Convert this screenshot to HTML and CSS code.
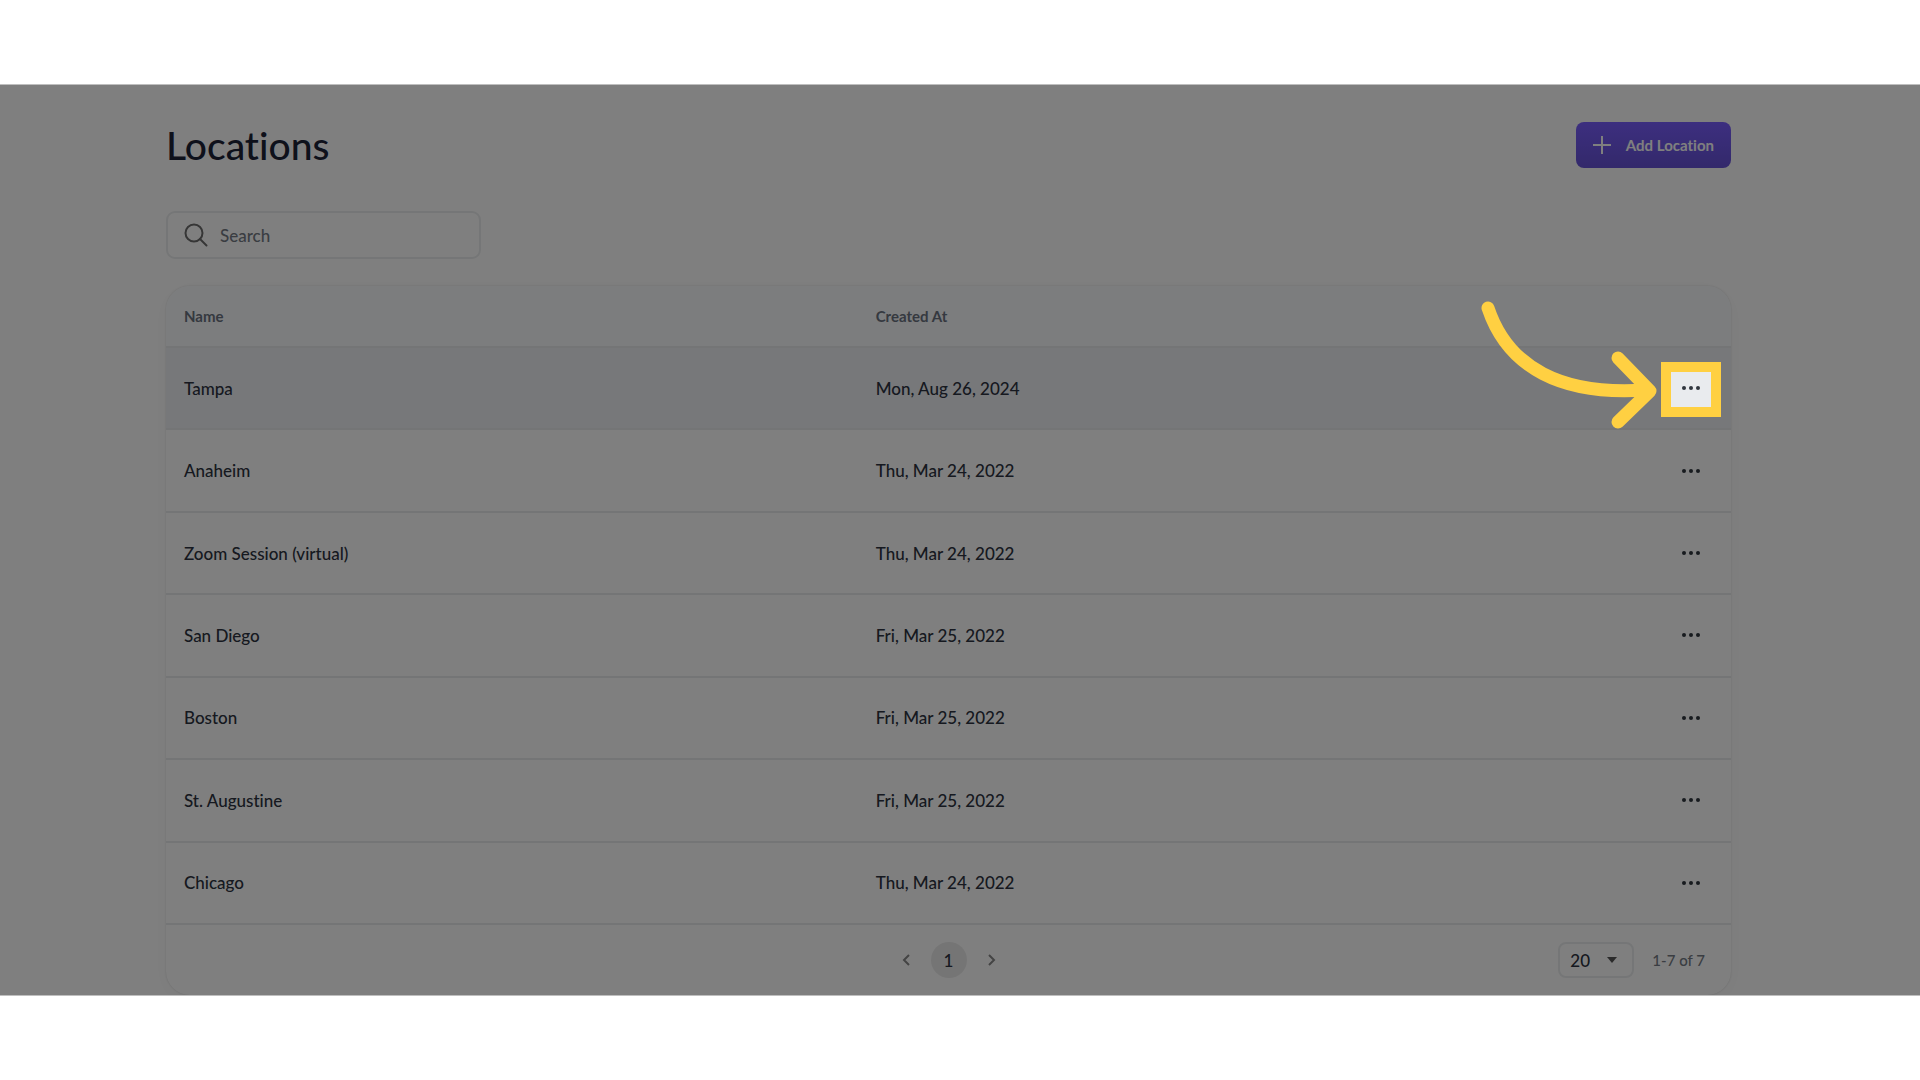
FILE: index.html
```
<!DOCTYPE html>
<html lang="en">
<head>
  <meta charset="UTF-8">
  <meta name="viewport" content="width=device-width, initial-scale=1.0">
  <title>Locations</title>
  <link rel="stylesheet" href="styles.css">
</head>
<body>
  <main class="screen">
    <header class="page-header">
      <h1>Locations</h1>
      <button class="add-button" type="button">
        <svg width="18" height="18" viewBox="0 0 18 18" fill="none" stroke="currentColor" stroke-width="2" aria-hidden="true"><path d="M9 0v18M0 9h18"/></svg>
        Add Location
      </button>
    </header>

    <label class="search">
      <svg width="24" height="24" viewBox="0 0 24 24" fill="none" stroke="currentColor" stroke-width="2" stroke-linecap="round" aria-hidden="true"><circle cx="10" cy="10" r="8.5"/><path d="M16 16l6.5 6.5"/></svg>
      <input type="text" placeholder="Search" aria-label="Search">
    </label>

    <section class="card">
      <table class="locations">
        <thead>
          <tr>
            <th class="col-name" scope="col">Name</th>
            <th scope="col">Created At</th>
            <th class="col-actions" scope="col" aria-label="Actions"></th>
          </tr>
        </thead>
        <tbody>
          <tr class="active">
            <td>Tampa</td>
            <td>Mon, Aug 26, 2024</td>
            <td class="col-actions">
              <div class="spotlight">
                <button class="more" type="button" aria-label="More actions for Tampa"><span></span><span></span><span></span></button>
                <svg class="arrow" width="178" height="130" viewBox="0 0 178 130" fill="none" stroke="#ffd042" stroke-width="13" stroke-linecap="round" stroke-linejoin="round" aria-hidden="true"><path d="M8 8C28 68 82 96 166 90"/><path d="M138 58l32 33-32 31"/></svg>
              </div>
            </td>
          </tr>
          <tr>
            <td>Anaheim</td>
            <td>Thu, Mar 24, 2022</td>
            <td class="col-actions"><button class="more" type="button" aria-label="More actions for Anaheim"><span></span><span></span><span></span></button></td>
          </tr>
          <tr>
            <td>Zoom Session (virtual)</td>
            <td>Thu, Mar 24, 2022</td>
            <td class="col-actions"><button class="more" type="button" aria-label="More actions for Zoom Session"><span></span><span></span><span></span></button></td>
          </tr>
          <tr>
            <td>San Diego</td>
            <td>Fri, Mar 25, 2022</td>
            <td class="col-actions"><button class="more" type="button" aria-label="More actions for San Diego"><span></span><span></span><span></span></button></td>
          </tr>
          <tr>
            <td>Boston</td>
            <td>Fri, Mar 25, 2022</td>
            <td class="col-actions"><button class="more" type="button" aria-label="More actions for Boston"><span></span><span></span><span></span></button></td>
          </tr>
          <tr>
            <td>St. Augustine</td>
            <td>Fri, Mar 25, 2022</td>
            <td class="col-actions"><button class="more" type="button" aria-label="More actions for St. Augustine"><span></span><span></span><span></span></button></td>
          </tr>
          <tr>
            <td>Chicago</td>
            <td>Thu, Mar 24, 2022</td>
            <td class="col-actions"><button class="more" type="button" aria-label="More actions for Chicago"><span></span><span></span><span></span></button></td>
          </tr>
        </tbody>
      </table>

      <footer class="table-footer">
        <nav class="pager" aria-label="Pagination">
          <button type="button" aria-label="Previous page"><svg width="8" height="12" viewBox="0 0 8 12" fill="none" stroke="currentColor" stroke-width="2" aria-hidden="true"><path d="M7 1L2 6l5 5"/></svg></button>
          <button class="current" type="button">1</button>
          <button type="button" aria-label="Next page"><svg width="8" height="12" viewBox="0 0 8 12" fill="none" stroke="currentColor" stroke-width="2" aria-hidden="true"><path d="M1 1l5 5-5 5"/></svg></button>
        </nav>
        <div class="page-size">
          <div class="select-wrap">
            <select aria-label="Rows per page">
              <option>20</option>
              <option>50</option>
            </select>
            <svg width="10" height="6" viewBox="0 0 10 6" fill="currentColor" aria-hidden="true"><path d="M0 0h10L5 6z"/></svg>
          </div>
          <span>1-7 of 7</span>
        </div>
      </footer>
    </section>
  </main>
</body>
</html>
```
FILE: styles.css
```
* {
  margin: 0;
  padding: 0;
  box-sizing: border-box;
}

body {
  display: flex;
  flex-direction: column;
  justify-content: center;
  min-height: 100vh;
  background: #ffffff;
  color: #2c3240;
  font-family: Lato, "Open Sans", sans-serif;
  font-size: 17px;
  font-weight: 500;
  font-variant-ligatures: none;
}

button,
input,
select {
  font: inherit;
  color: inherit;
  background: none;
  border: none;
}

button {
  cursor: pointer;
}

.screen {
  overflow: hidden;
  padding: 37px 189px 0 166px;
  border-top: 1px solid #bfbfbf;
  border-bottom: 1px solid #bfbfbf;
}

/* Header */
.page-header {
  display: flex;
  justify-content: space-between;
  align-items: center;
  height: 46px;
  margin-bottom: 43px;
}

h1 {
  color: #1c2236;
  font-size: 39px;
  font-weight: 500;
}

.add-button {
  display: flex;
  align-items: center;
  gap: 15px;
  height: 46px;
  padding: 0 17px;
  border-radius: 8px;
  background: linear-gradient(#7a5eff, #6652d6);
  color: #ffffff;
  font-size: 15px;
  font-weight: 700;
}

/* Search */
.search {
  display: flex;
  align-items: center;
  gap: 12px;
  width: 315px;
  height: 48px;
  margin-bottom: 27px;
  padding: 0 16px;
  border: 2px solid #ebedee;
  border-radius: 9px;
  color: #6c6c6c;
}

.search input {
  flex: 1;
  min-width: 0;
  outline: none;
}

.search input::placeholder {
  color: #747a84;
  opacity: 1;
}

/* Table */
.card {
  border-radius: 24px;
  box-shadow: 0 0 2px rgba(0, 0, 0, 0.16), 0 4px 24px rgba(0, 0, 0, 0.03);
}

.locations {
  width: 100%;
  height: 639px;
  border-collapse: separate;
  border-spacing: 0;
  table-layout: fixed;
}

th,
td {
  padding: 0 18px;
  border-bottom: 2px solid #e8eaec;
  text-align: left;
}

th {
  height: 62px;
  background: #f8fafd;
  color: #6a7280;
  font-size: 15px;
  font-weight: 700;
}

th:first-child {
  border-top-left-radius: 24px;
}

th:last-child {
  border-top-right-radius: 24px;
}

td {
  height: 82px;
}

.col-name {
  width: 44.2%;
}

.col-actions {
  width: 120px;
  padding-right: 20px;
}

.active td {
  background: #eef1f4;
}

.more {
  display: flex;
  align-items: center;
  justify-content: center;
  gap: 3px;
  width: 40px;
  height: 36px;
  margin-left: auto;
}

.more span {
  width: 4px;
  height: 4px;
  border-radius: 50%;
  background: #30363e;
}

/* Dims the whole screen except the framed button */
.spotlight {
  position: relative;
  z-index: 1;
  width: 40px;
  margin-left: auto;
}

.spotlight::before {
  content: '';
  position: absolute;
  z-index: -1;
  inset: -8px -10px -11px;
  border: 10px solid #ffd042;
  background: #e9ebee;
  box-shadow: 0 0 0 4000px rgba(0, 0, 0, 0.5);
}

.arrow {
  position: absolute;
  right: 53px;
  bottom: -24px;
  pointer-events: none;
}

/* Footer */
.table-footer {
  display: grid;
  grid-template-columns: 1fr auto 1fr;
  align-items: center;
  height: 70px;
  padding: 0 26px;
}

.pager {
  display: flex;
  grid-column: 2;
  gap: 7px;
  color: #888888;
}

.pager button {
  display: flex;
  align-items: center;
  justify-content: center;
  width: 36px;
  height: 36px;
  border-radius: 50%;
}

.pager .current {
  background: #ebebeb;
  color: #2c3240;
}

.page-size {
  display: flex;
  align-items: center;
  justify-content: flex-end;
  gap: 18px;
  color: #747a84;
  font-size: 15px;
}

.select-wrap {
  display: grid;
  align-items: center;
  color: #555555;
}

.select-wrap select,
.select-wrap svg {
  grid-area: 1 / 1;
}

.select-wrap select {
  appearance: none;
  width: 76px;
  height: 36px;
  padding: 0 10px;
  border: 2px solid #ebedee;
  border-radius: 8px;
  color: #2c3240;
  font-size: 17px;
}

.select-wrap svg {
  justify-self: end;
  margin-right: 17px;
  pointer-events: none;
}
```
